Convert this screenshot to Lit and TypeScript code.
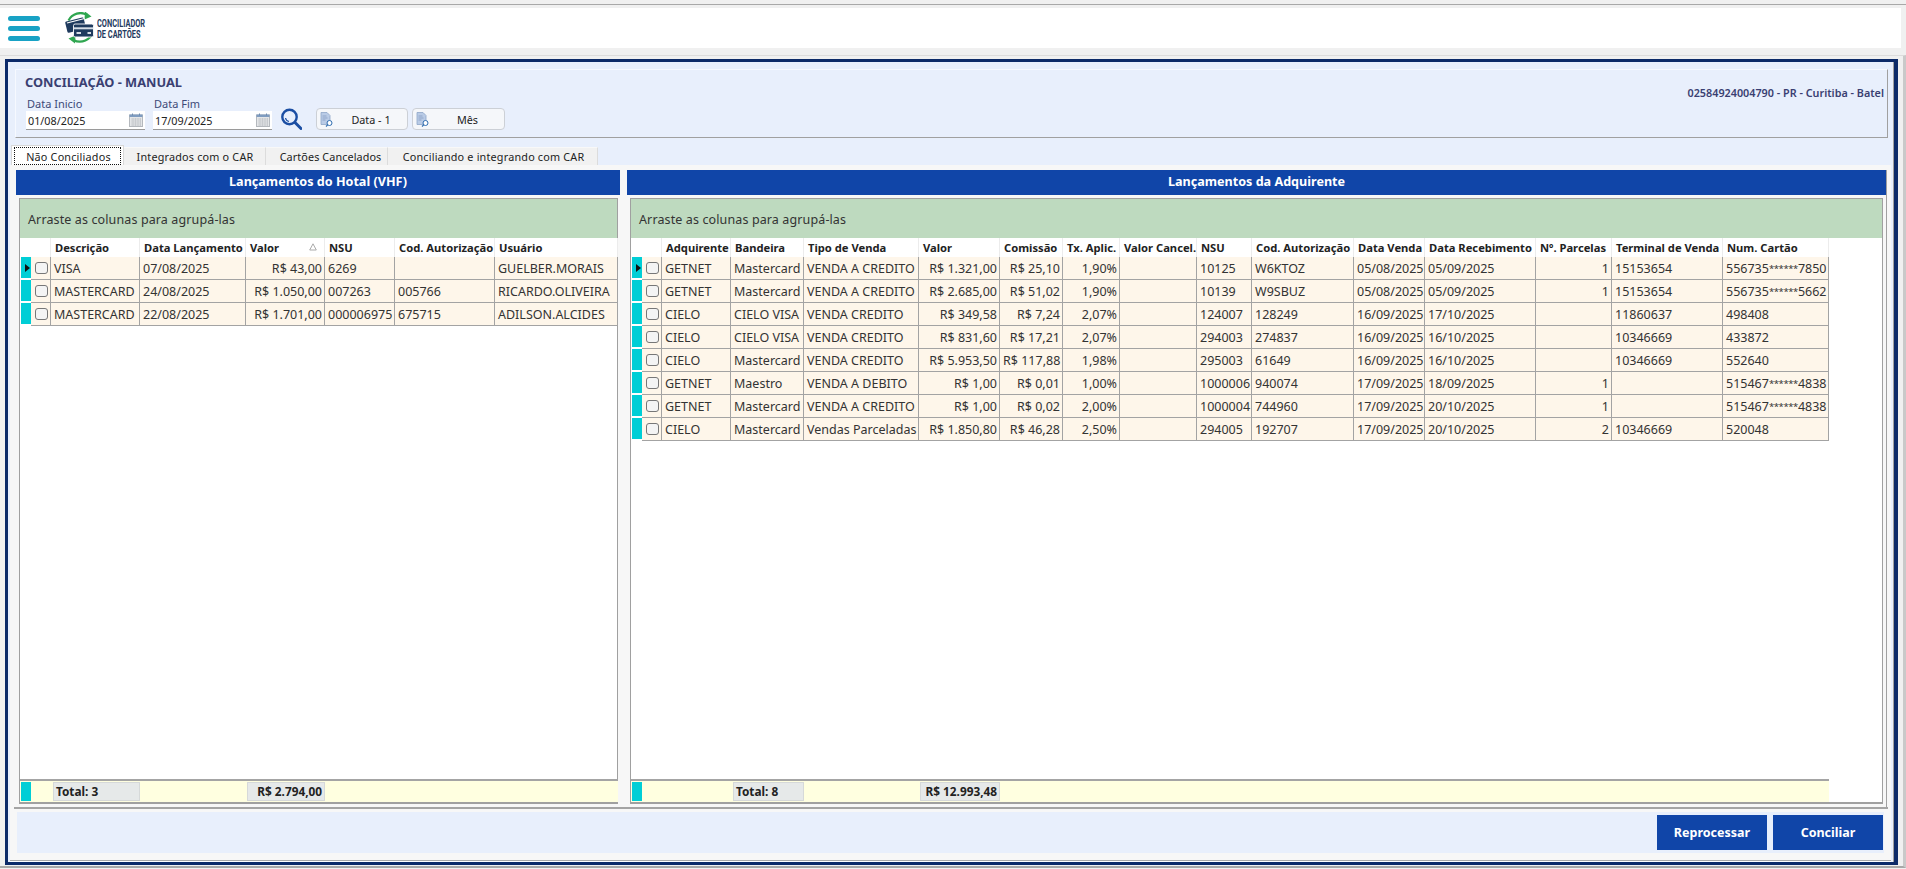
import { LitElement, html, css, svg } from "lit";
import { customElement } from "lit/decorators.js";

type Col = { t: string; w: number; r?: boolean };

const leftCols: Col[] = [
  { t: "", w: 11 }, { t: "", w: 20 },
  { t: "Descrição", w: 89 }, { t: "Data Lançamento", w: 106 }, { t: "Valor", w: 79, r: true },
  { t: "NSU", w: 70 }, { t: "Cod. Autorização", w: 100 }, { t: "Usuário", w: 123 },
];
const leftRows = [
  ["VISA", "07/08/2025", "R$ 43,00", "6269", "", "GUELBER.MORAIS"],
  ["MASTERCARD", "24/08/2025", "R$ 1.050,00", "007263", "005766", "RICARDO.OLIVEIRA"],
  ["MASTERCARD", "22/08/2025", "R$ 1.701,00", "000006975", "675715", "ADILSON.ALCIDES"],
];
const rightCols: Col[] = [
  { t: "", w: 11 }, { t: "", w: 20 },
  { t: "Adquirente", w: 69 }, { t: "Bandeira", w: 73 }, { t: "Tipo de Venda", w: 115 },
  { t: "Valor", w: 81, r: true }, { t: "Comissão", w: 63, r: true }, { t: "Tx. Aplic.", w: 57, r: true },
  { t: "Valor Cancel.", w: 77, r: true }, { t: "NSU", w: 55 }, { t: "Cod. Autorização", w: 102 },
  { t: "Data Venda", w: 71 }, { t: "Data Recebimento", w: 111 }, { t: "Nº. Parcelas", w: 76, r: true },
  { t: "Terminal de Venda", w: 111 }, { t: "Num. Cartão", w: 106 },
];
const rightRows = [
  ["GETNET", "Mastercard", "VENDA A CREDITO", "R$ 1.321,00", "R$ 25,10", "1,90%", "", "10125", "W6KTOZ", "05/08/2025", "05/09/2025", "1", "15153654", "556735******7850"],
  ["GETNET", "Mastercard", "VENDA A CREDITO", "R$ 2.685,00", "R$ 51,02", "1,90%", "", "10139", "W9SBUZ", "05/08/2025", "05/09/2025", "1", "15153654", "556735******5662"],
  ["CIELO", "CIELO VISA", "VENDA CREDITO", "R$ 349,58", "R$ 7,24", "2,07%", "", "124007", "128249", "16/09/2025", "17/10/2025", "", "11860637", "498408"],
  ["CIELO", "CIELO VISA", "VENDA CREDITO", "R$ 831,60", "R$ 17,21", "2,07%", "", "294003", "274837", "16/09/2025", "16/10/2025", "", "10346669", "433872"],
  ["CIELO", "Mastercard", "VENDA CREDITO", "R$ 5.953,50", "R$ 117,88", "1,98%", "", "295003", "61649", "16/09/2025", "16/10/2025", "", "10346669", "552640"],
  ["GETNET", "Maestro", "VENDA A DEBITO", "R$ 1,00", "R$ 0,01", "1,00%", "", "1000006", "940074", "17/09/2025", "18/09/2025", "1", "", "515467******4838"],
  ["GETNET", "Mastercard", "VENDA A CREDITO", "R$ 1,00", "R$ 0,02", "2,00%", "", "1000004", "744960", "17/09/2025", "20/10/2025", "1", "", "515467******4838"],
  ["CIELO", "Mastercard", "Vendas Parceladas", "R$ 1.850,80", "R$ 46,28", "2,50%", "", "294005", "192707", "17/09/2025", "20/10/2025", "2", "10346669", "520048"],
];

const calendarIcon = svg`<svg class="cal" viewBox="0 0 14 14" width="14" height="14">
  <rect x="0.5" y="2" width="13" height="11.500" fill="#e4e6e8" stroke="#b4b8bd"/>
  <rect x="0.5" y="1.500" width="13" height="2.500" fill="#7f9cc0"/>
  <path d="M3.500 .5v2M10.500 .5v2" stroke="#6f8cb0" stroke-width="1"/>
  <path d="M2 6h10M2 8h10M2 10h10M2 12h10M4 5v8M6.500 5v8M9 5v8M11.500 5v8" stroke="#bcc0c4" stroke-width=".6" fill="none"/>
</svg>`;

const docIcon = svg`<svg class="doc" viewBox="0 0 14 15" width="14" height="15">
  <path d="M1 .5h6l3 3v9H1z" fill="#b9cbe6" stroke="#8ea6c8" stroke-width=".8"/>
  <path d="M2.500 4h4M2.500 6h5M2.500 8h3" stroke="#7f97bb" stroke-width=".7"/>
  <circle cx="9.500" cy="11" r="2.500" fill="#fff" stroke="#2f6db0" stroke-width="1"/>
  <path d="M7.700 12.800 6 14.500" stroke="#2f6db0" stroke-width="1.200"/>
</svg>`;

@customElement("app-root")
export class AppRoot extends LitElement {
  static styles = css`
    :host {
      display: block; width: 1906px; height: 869px; overflow: hidden; background: #f0f0f0;
      font-family: "Noto Sans", Tahoma, "Liberation Sans", sans-serif; font-size: 12.5px; color: #222;
    }
    * { box-sizing: border-box; }
    .topline { height: 5px; border-bottom: 1px solid #a8a8a8; }
    .topbar {
      height: 40px; margin: 3px 5px 0 0; background: #fff; display: flex; align-items: center;
      padding-left: 8px;
    }
    .burger { width: 32px; display: flex; flex-direction: column; gap: 5px; }
    .burger i { display: block; height: 5px; border-radius: 3px; background: #18a2c5; }
    .logo { margin-left: 24px; display: flex; align-items: center; gap: 1px; }
    .logo-text {
      font: 700 10px/10.400px Roboto, sans-serif; color: #1f3b5e; transform: scaleX(.74);
      transform-origin: left center; width: 50px; white-space: nowrap; margin-top: 3px;
    }
    .shell {
      margin-top: 7px; height: 813px; padding: 3px 2px 0 5px;
      border-top: 1px solid #dcdcdc; border-right: 3px solid #c9c9c9; border-bottom: 2px solid #a8a8a8;
    }
    .frame {
      width: 1893px; height: 806px; border: 3px solid #0c2a68; border-right-width: 4px;
      background: #e8effc; display: flex; flex-direction: column;
      box-shadow: inset -1px 0 0 #a0a0a0;
    }
    .hdr {
      margin: 7px 6px 0 7px; height: 69px; flex: none; display: flex; justify-content: space-between;
      border-right: 1px solid #a0a0a0; border-bottom: 1px solid #a0a0a0; border-top: 1px solid #f6f9ff;
      border-left: 1px solid #f6f9ff; padding: 4px 3px 0 9px;
    }
    .title { font-size: 12.8px; line-height: 17px; font-weight: 700; color: #3a3f72; }
    .filters { display: flex; align-items: flex-end; margin-top: 5px; padding-left: 1px; }
    .field { width: 119px; margin-right: 8px; }
    .field label { display: block; font-size: 11px; line-height: 15px; color: #3d4a78; padding-left: 1px; }
    .input {
      height: 19px; background: #fff; border-bottom: 1px solid #9a9a9a; display: flex;
      align-items: center; justify-content: space-between; padding: 0 2px; font-size: 10.8px; color: #222;
    }
    .search { margin: 0 14px 0 1px; width: 21px; height: 22px; }
    .btn {
      width: 92px; height: 22px; margin-right: 4px; background: #f5f7fa; border: 1px solid #ccd0d6;
      border-radius: 4px; display: flex; align-items: center; padding-left: 3px; font-size: 10.8px; color: #222;
    }
    .btn.wide { width: 93px; }
    .btn span { flex: 1; text-align: center; padding-left: 1px; }
    .unit { font-size: 10.8px; font-weight: 600; color: #3a3f72; line-height: 16px; margin-top: 11px; white-space: nowrap; }
    .tabs { margin: 7px 0 0 3px; height: 20px; flex: none; display: flex; align-items: flex-end; font-size: 10.8px; letter-spacing: .2px; }
    .tab {
      height: 18px; background: #f1f1f1; border-right: 1px solid #dcdcdc; border-top: 1px solid #f8f8f8;
      display: flex; align-items: center; justify-content: center; white-space: nowrap; color: #222;
    }
    .tab.w113 { width: 113px; }
    .tab.w142 { width: 142px; padding-left: 1px; }
    .tab.w122 { width: 122px; padding-left: 8px; letter-spacing: .1px; }
    .tab.w210 { width: 210px; padding-left: 2px; }
    .tab.on { height: 20px; background: #fff; border: 1px solid #d8d8d8; border-bottom: 0; padding: 1px 2px 0; }
    .tab.on b { font-weight: 400; flex: 1; height: 100%; display: flex; align-items: center; justify-content: center; border: 1px dotted #111; padding-left: 2px; }
    .body {
      flex: 1; margin: 0 3px 0 2px; background: #f7f7f7; display: flex; flex-direction: column; min-height: 0;
    }
    .page {
      margin: 0 3px 0 4px; height: 644px; flex: none; display: flex; padding: 5px 0 0 2px;
      border-bottom: 2px solid #a4a4a4;
    }
    .panel { flex: none; display: flex; flex-direction: column; height: 637px; }
    .panel.l { width: 604px; }
    .panel.r { width: 1260px; margin-left: 7px; border-right: 1px solid #a0a0a0; }
    .ptitle {
      height: 25px; flex: none; background: #1045a8; color: #fff; text-align: center;
      font-size: 12.6px; font-weight: 700; line-height: 24px;
    }
    .box {
      margin: 3px 2px 0 3px; height: 606px; background: #fff; border: 1px solid #a0a0a0; border-bottom-width: 2px;
      display: flex; flex-direction: column;
    }
    .panel.r .box { margin-right: 3px; }
    .group {
      height: 39px; flex: none; background: #bedabf; padding: 12px 0 0 8px; font-size: 12.5px; line-height: 17px;
      color: #333; letter-spacing: .12px;
    }
    table { border-collapse: separate; border-spacing: 0; table-layout: fixed; flex: none; }
    .data th {
      height: 19px; background: #fff; font-weight: 700; text-align: left; padding: 0 0 0 4px;
      border-right: 1px solid #ececec; color: #222; font-size: 11.2px; white-space: nowrap; overflow: hidden; position: relative;
    }
    .data td {
      height: 23px; background: #fef6ea; padding: 0 2px 0 3px; border-right: 1px solid #a3a3a3; border-bottom: 1px solid #a3a3a3;
      white-space: nowrap; overflow: hidden; color: #333; font-size: 12.5px;
    }
    .data td.right { text-align: right; padding-right: 2px; }
    .data td.ind, .data th.ind { background: #fff; padding: 0; border-bottom: 0; border-right: 0; }
    .data td.chk { padding: 0 0 0 4px; }
    .stars { font-size: 9.5px; letter-spacing: -.4px; position: relative; top: -1px; }
    .ind i { display: flex; align-items: center; height: 21px; margin: 0 0 2px 1px; background: #00ced6; }
    .ind i.cur::before {
      content: ""; margin-left: 4px; border-left: 5px solid #111; border-top: 4.5px solid transparent; border-bottom: 4.5px solid transparent;
    }
    .cb { display: block; width: 13px; height: 12px; margin-top: -1px; border: 1px solid #777; border-radius: 3px; background: #f4f4f4; }
    .sort { position: absolute; right: 7px; top: 5px; width: 8px; height: 8px; }
    .fill { flex: 1; }
    .foot { height: 23px; flex: none; border-top: 2px solid #a4a4a4; }
    .foot td { height: 21px; background: #ffffe0; padding: 1px 0; font-weight: 700; font-size: 11.8px; color: #222; white-space: nowrap; }
    .foot td.ind { padding: 1px 0 1px 1px; }
    .foot .ind i { display: block; height: 19px; margin: 0; background: #00ced6; }
    .foot td.sum span {
      display: block; height: 19px; line-height: 17px; background: #e6e9e9; border: 1px solid #d6d9d9; padding: 0 2px;
    }
    .foot td.sum.money span { text-align: right; margin-left: 1px; }
    .foot td.sum.count span { margin-left: 2px; }
    .bottom {
      margin: 3px 7px 0 7px; height: 41px; flex: none; background: #e8effc; display: flex; justify-content: flex-end; gap: 6px; padding: 3px 1px 0 0;
    }
    .bottom button {
      width: 110px; height: 35px; border: 0; background: #1045a8; color: #fff; font: 700 12.5px "Noto Sans", sans-serif;
    }
    .band { flex: 1; border-bottom: 1px solid #a8a8a8; margin-bottom: 1px; box-shadow: 0 1px 0 #fff; }
  `;

  private cell(v: string) {
    const m = v.match(/^(\d+)(\*+)(\d+)$/);
    return m ? html`${m[1]}<span class="stars">${m[2]}</span>${m[3]}` : v;
  }

  private grid(cols: Col[], rows: string[][], sortCol: number) {
    const total = cols.reduce((a, c) => a + c.w, 0);
    return html`<table class="data" style="width:${total}px">
      <colgroup>${cols.map((c) => html`<col style="width:${c.w}px" />`)}</colgroup>
      <thead><tr>${cols.map((c, i) => html`<th class=${i === 0 ? "ind" : ""}>${c.t}${i === sortCol
        ? svg`<svg class="sort" viewBox="0 0 8 8"><path d="M4 .8 7.300 7H.7z" fill="#fff" stroke="#aaa"/></svg>` : ""}</th>`)}</tr></thead>
      <tbody>${rows.map((r, ri) => html`<tr>
        <td class="ind"><i class=${ri === 0 ? "cur" : ""}></i></td>
        <td class="chk"><span class="cb"></span></td>
        ${r.map((v, i) => html`<td class=${cols[i + 2].r ? "right" : ""}>${this.cell(v)}</td>`)}
      </tr>`)}</tbody>
    </table>`;
  }

  private foot(cols: Col[], sums: Record<number, string>) {
    const total = cols.reduce((a, c) => a + c.w, 0);
    return html`<table class="foot" style="width:${total}px">
      <colgroup>${cols.map((c) => html`<col style="width:${c.w}px" />`)}</colgroup>
      <tbody><tr>${cols.map((_, i) => i === 0
        ? html`<td class="ind"><i></i></td>`
        : sums[i] ? html`<td class="sum ${sums[i].startsWith("R$") ? "money" : "count"}"><span>${sums[i]}</span></td>` : html`<td></td>`)}</tr></tbody>
    </table>`;
  }

  render() {
    return html`
      <div class="topline"></div>
      <div class="topbar">
        <div class="burger"><i></i><i></i><i></i></div>
        <div class="logo">
          <svg viewBox="0 0 32 32" width="32" height="32">
            <path d="M4.500 8.500A13.500 13.500 0 0 1 23.500 3" fill="none" stroke="#2fa650" stroke-width="2.200"/>
            <path d="M21 -.5 27.500 4.500 20.500 7.500z" fill="#2fa650"/>
            <path d="M29 19.500A13.500 13.500 0 0 1 9.500 28" fill="none" stroke="#2fa650" stroke-width="2.200"/>
            <path d="M11.500 23.500 4.500 26.500 11 31.500z" fill="#2fa650"/>
            <rect x="2" y="7.500" width="19" height="11.500" rx="1.300" transform="rotate(-14 11 13)" fill="#1f3b5e"/>
            <path d="M3 11 20.500 6.500" stroke="#fff" stroke-width="1.100"/>
            <rect x="9.500" y="12" width="20" height="13" rx="1.600" fill="#1f3b5e" stroke="#fff" stroke-width=".9"/>
            <rect x="10" y="15.300" width="19" height="2" fill="#d5dde6"/>
            <rect x="12.500" y="20" width="4.500" height="2" fill="#d5dde6"/>
            <rect x="23.500" y="20" width="3.500" height="2" fill="#d5dde6"/>
          </svg>
          <div class="logo-text">CONCILIADOR<br />DE CARTÕES</div>
        </div>
      </div>
      <div class="shell">
        <div class="frame">
          <div class="hdr">
            <div>
              <div class="title">CONCILIAÇÃO - MANUAL</div>
              <div class="filters">
                <div class="field"><label>Data Inicio</label><div class="input">01/08/2025 ${calendarIcon}</div></div>
                <div class="field"><label>Data Fim</label><div class="input">17/09/2025 ${calendarIcon}</div></div>
                <svg class="search" viewBox="0 0 21 22">
                  <circle cx="8.500" cy="9" r="7.200" fill="none" stroke="#1b4ea3" stroke-width="2.400"/>
                  <path d="M14 14.500 20 20.500" stroke="#1b4ea3" stroke-width="3" stroke-linecap="round"/>
                  <path d="M4.500 10a4.500 4.500 0 0 0 3.500 3.500" stroke="#1b4ea3" stroke-width="1.200" fill="none"/>
                </svg>
                <div class="btn">${docIcon}<span>Data - 1</span></div>
                <div class="btn wide">${docIcon}<span>Mês</span></div>
              </div>
            </div>
            <div class="unit">02584924004790 - PR - Curitiba - Batel</div>
          </div>
          <div class="tabs">
            <div class="tab on w113"><b>Não Conciliados</b></div>
            <div class="tab w142">Integrados com o CAR</div>
            <div class="tab w122">Cartões Cancelados</div>
            <div class="tab w210">Conciliando e integrando com CAR</div>
          </div>
          <div class="body">
            <div class="page">
              <section class="panel l">
                <div class="ptitle">Lançamentos do Hotal (VHF)</div>
                <div class="box">
                  <div class="group">Arraste as colunas para agrupá-las</div>
                  ${this.grid(leftCols, leftRows, 4)}
                  <div class="fill"></div>
                  ${this.foot(leftCols, { 2: "Total: 3", 4: "R$ 2.794,00" })}
                </div>
              </section>
              <section class="panel r">
                <div class="ptitle">Lançamentos da Adquirente</div>
                <div class="box">
                  <div class="group">Arraste as colunas para agrupá-las</div>
                  ${this.grid(rightCols, rightRows, -1)}
                  <div class="fill"></div>
                  ${this.foot(rightCols, { 3: "Total: 8", 5: "R$ 12.993,48" })}
                </div>
              </section>
            </div>
            <div class="bottom"><button>Reprocessar</button><button>Conciliar</button></div>
            <div class="band"></div>
          </div>
        </div>
      </div>
    `;
  }
}
